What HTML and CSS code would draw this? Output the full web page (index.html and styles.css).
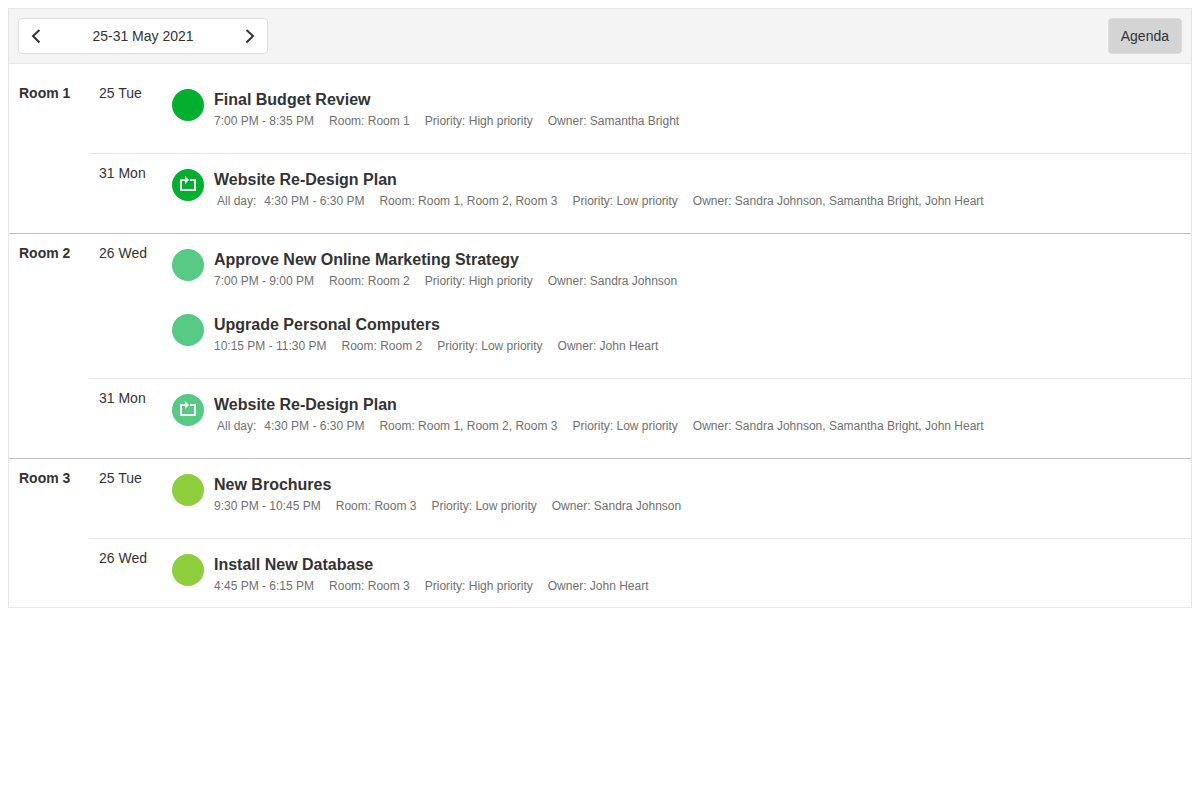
FILE: index.html
```html
<!DOCTYPE html>
<html lang="en">
<head>
<meta charset="utf-8">
<title>Agenda</title>
<link rel="stylesheet" href="styles.css">
</head>
<body>
<svg class="symbols" aria-hidden="true">
  <symbol id="repeat" viewBox="0 0 16 16">
    <path d="M0 3H5V0L9 4L5 8V5H2V13H14V5H10V3H16V15H0Z" fill="#fff"/>
  </symbol>
</svg>
<main class="scheduler">
  <header class="toolbar">
    <div class="navigator">
      <button class="nav-button" type="button" aria-label="Previous week"><svg viewBox="0 0 18 18"><path d="M12.5 3L6 9L12.5 15.5" /></svg></button>
      <button class="caption" type="button">25-31 May 2021</button>
      <button class="nav-button" type="button" aria-label="Next week"><svg viewBox="0 0 18 18"><path d="M5.5 3L12 9L5.5 15.5" /></svg></button>
    </div>
    <button class="view-button" type="button">Agenda</button>
  </header>
  <div class="agenda">
    <section class="group room-1">
      <h2 class="room">Room 1</h2>
      <div class="days">
        <div class="day">
          <div class="date">25 Tue</div>
          <div class="list">
            <article class="item">
              <span class="marker"></span>
              <div class="text">
                <h3 class="title">Final Budget Review</h3>
                <div class="details"><span>7:00 PM - 8:35 PM</span><span>Room: Room 1</span><span>Priority: High priority</span><span>Owner: Samantha Bright</span></div>
              </div>
            </article>
          </div>
        </div>
        <div class="day">
          <div class="date">31 Mon</div>
          <div class="list">
            <article class="item">
              <span class="marker"><svg><use href="#repeat"/></svg></span>
              <div class="text">
                <h3 class="title">Website Re-Design Plan</h3>
                <div class="details"><span><span class="all-day">All day:</span>4:30 PM - 6:30 PM</span><span>Room: Room 1, Room 2, Room 3</span><span>Priority: Low priority</span><span>Owner: Sandra Johnson, Samantha Bright, John Heart</span></div>
              </div>
            </article>
          </div>
        </div>
      </div>
    </section>
    <section class="group room-2">
      <h2 class="room">Room 2</h2>
      <div class="days">
        <div class="day">
          <div class="date">26 Wed</div>
          <div class="list">
            <article class="item">
              <span class="marker"></span>
              <div class="text">
                <h3 class="title">Approve New Online Marketing Strategy</h3>
                <div class="details"><span>7:00 PM - 9:00 PM</span><span>Room: Room 2</span><span>Priority: High priority</span><span>Owner: Sandra Johnson</span></div>
              </div>
            </article>
            <article class="item">
              <span class="marker"></span>
              <div class="text">
                <h3 class="title">Upgrade Personal Computers</h3>
                <div class="details"><span>10:15 PM - 11:30 PM</span><span>Room: Room 2</span><span>Priority: Low priority</span><span>Owner: John Heart</span></div>
              </div>
            </article>
          </div>
        </div>
        <div class="day">
          <div class="date">31 Mon</div>
          <div class="list">
            <article class="item">
              <span class="marker"><svg><use href="#repeat"/></svg></span>
              <div class="text">
                <h3 class="title">Website Re-Design Plan</h3>
                <div class="details"><span><span class="all-day">All day:</span>4:30 PM - 6:30 PM</span><span>Room: Room 1, Room 2, Room 3</span><span>Priority: Low priority</span><span>Owner: Sandra Johnson, Samantha Bright, John Heart</span></div>
              </div>
            </article>
          </div>
        </div>
      </div>
    </section>
    <section class="group room-3">
      <h2 class="room">Room 3</h2>
      <div class="days">
        <div class="day">
          <div class="date">25 Tue</div>
          <div class="list">
            <article class="item">
              <span class="marker"></span>
              <div class="text">
                <h3 class="title">New Brochures</h3>
                <div class="details"><span>9:30 PM - 10:45 PM</span><span>Room: Room 3</span><span>Priority: Low priority</span><span>Owner: Sandra Johnson</span></div>
              </div>
            </article>
          </div>
        </div>
        <div class="day">
          <div class="date">26 Wed</div>
          <div class="list">
            <article class="item">
              <span class="marker"></span>
              <div class="text">
                <h3 class="title">Install New Database</h3>
                <div class="details"><span>4:45 PM - 6:15 PM</span><span>Room: Room 3</span><span>Priority: High priority</span><span>Owner: John Heart</span></div>
              </div>
            </article>
          </div>
        </div>
      </div>
    </section>
  </div>
</main>
</body>
</html>
```
FILE: styles.css
```css
* {
  box-sizing: border-box;
}

body {
  margin: 8px;
  background: #fff;
  color: #333;
  font: 14px/18px "Liberation Sans", Arial, sans-serif;
}

h2,
h3 {
  margin: 0;
}

button {
  border: 0;
  background: none;
  color: inherit;
  font: inherit;
  cursor: pointer;
}

.symbols {
  display: none;
}

.scheduler {
  border: 1px solid #e6e6e6;
}

.toolbar {
  display: flex;
  justify-content: space-between;
  padding: 9px;
  border-bottom: 1px solid #e6e6e6;
  background: #f4f4f4;
}

.navigator {
  display: flex;
  width: 250px;
  height: 36px;
  border: 1px solid #ddd;
  border-radius: 4px;
  background: #fff;
}

.nav-button {
  display: flex;
  align-items: center;
  justify-content: center;
  width: 34px;
  padding: 0;
}

.nav-button svg {
  width: 18px;
  height: 18px;
  fill: none;
  stroke: #333;
  stroke-width: 2;
}

.caption {
  flex: 1;
  padding: 0;
}

.view-button {
  height: 36px;
  padding: 0 12px;
  border: 1px solid #ddd;
  border-radius: 4px;
  background: #d4d4d4;
}

.agenda {
  padding-top: 10px;
}

.group {
  display: flex;
}

.group + .group {
  border-top: 1px solid #c0c0c0;
}

.room {
  flex: none;
  width: 80px;
  padding: 10px;
  font-size: 14px;
}

.days {
  flex: 1;
}

.day {
  display: flex;
  padding-bottom: 14px;
}

.day + .day {
  border-top: 1px solid #e6e6e6;
}

.group:last-child .day:last-child {
  padding-bottom: 3px;
}

.date {
  flex: none;
  width: 83px;
  padding: 10px;
}

.list {
  display: flex;
  flex: 1;
  flex-direction: column;
  gap: 15px;
  padding-top: 15px;
}

.item {
  display: flex;
  gap: 10px;
  min-height: 50px;
}

.marker {
  display: flex;
  flex: none;
  justify-content: center;
  width: 32px;
  height: 32px;
  padding-top: 7px;
  border-radius: 50%;
}

.marker svg {
  width: 16px;
  height: 16px;
}

.room-1 .marker {
  background: #03af2e;
}

.room-2 .marker {
  background: #56ca85;
}

.room-3 .marker {
  background: #8ecd3c;
}

.title {
  font-size: 16px;
  line-height: 22px;
}

.details {
  display: flex;
  flex-wrap: wrap;
  column-gap: 15px;
  color: #707070;
  font-size: 12px;
  line-height: 20px;
}

.all-day {
  padding: 0 8px 0 3px;
}
```
